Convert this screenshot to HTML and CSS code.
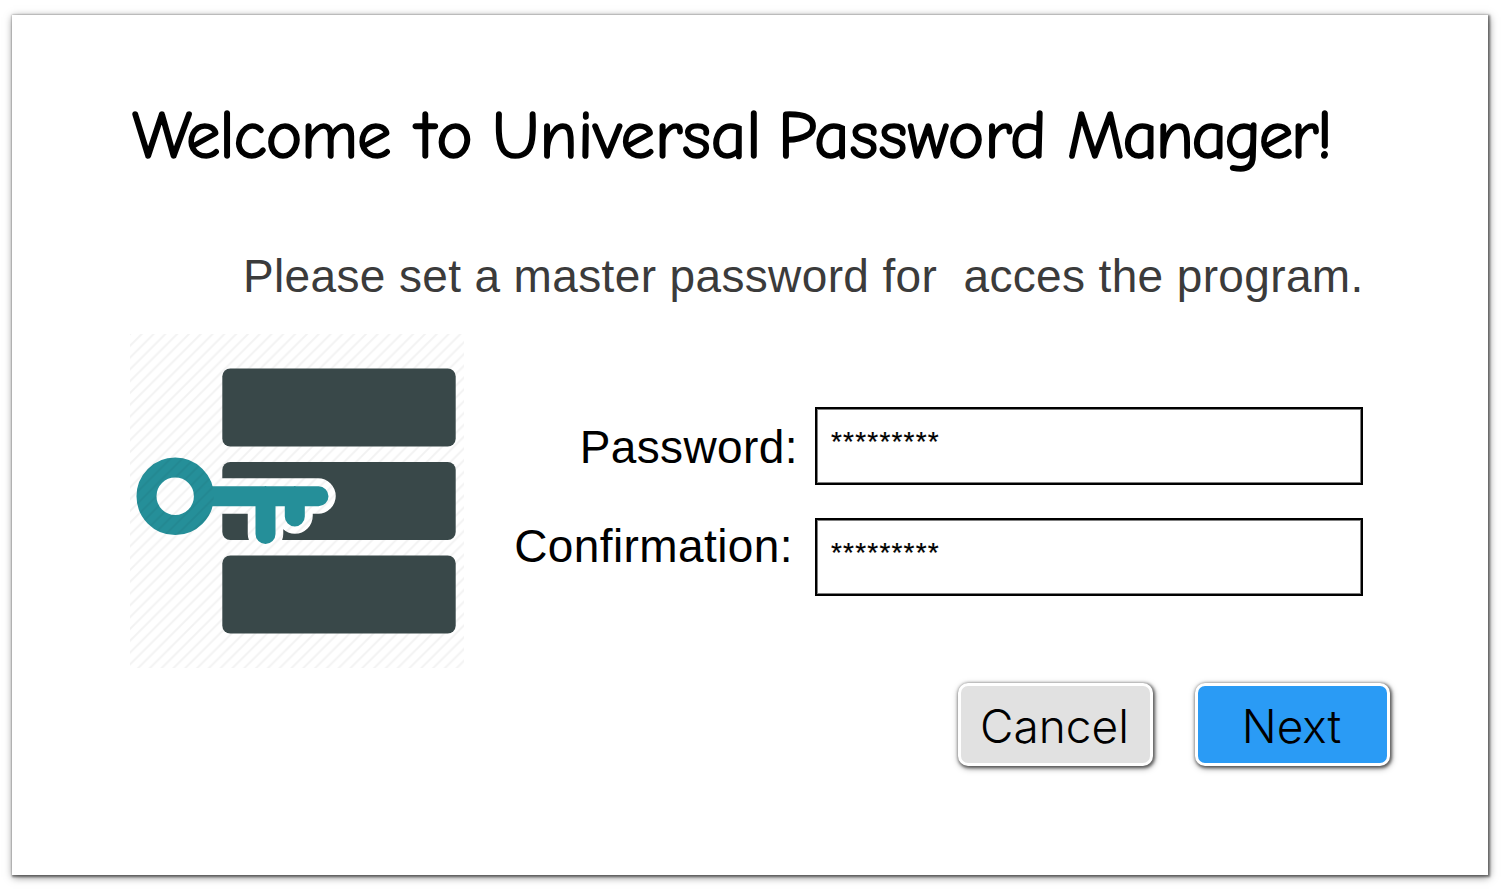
FILE: index.html
```html
<!DOCTYPE html>
<html lang="en">
<head>
<meta charset="utf-8">
<title>Universal Password Manager</title>
<link rel="stylesheet" href="styles.css">
</head>
<body>
<main class="dialog">
  <h1 class="title"><span class="w1">Welcome</span><span class="w2">to</span><span class="w3">Universal</span><span class="w4">Password</span><span class="w5">Manager!</span></h1>
  <p class="subtitle">Please set a master password for&nbsp; acces the program.</p>
  <div class="content">
    <svg class="emblem" viewBox="0 0 334 334" aria-hidden="true">
      <defs>
        <pattern id="hatch" width="11.8" height="11.8" patternUnits="userSpaceOnUse">
          <path d="M-3 3L3-3M-1 12.8L12.8-1M8.800 14.800L14.800 8.800" stroke="#000" stroke-opacity=".05" stroke-width="1.700"/>
        </pattern>
        <mask id="keyGap">
          <rect width="334" height="334" fill="#fff"/>
          <path d="M50 162H188M135.500 162V200M165 162V182" fill="none" stroke="#000" stroke-width="35.500" stroke-linecap="round"/>
          <path d="M122 188H149V210H122Z" fill="#000"/>
        </mask>
      </defs>
      <rect width="334" height="334" fill="url(#hatch)"/>
      <g fill="#394849">
        <rect x="92.300" y="34.500" width="233.400" height="78" rx="8"/>
        <rect x="92.300" y="128" width="233.400" height="78" rx="8" mask="url(#keyGap)"/>
        <rect x="92.300" y="221.500" width="233.400" height="78" rx="8"/>
      </g>
      <g fill="none" stroke="#258f99" stroke-width="20" stroke-linecap="round">
        <circle cx="45.200" cy="162.300" r="28.700"/>
        <path d="M78 162.300H188.500M135.500 162V200M164.800 162V182.500"/>
      </g>
      <circle cx="45.200" cy="162.300" r="28.700" fill="none" stroke="url(#hatch)" stroke-width="20"/>
    </svg>
    <form class="form">
      <label class="label l1" for="password">Password:</label>
      <input class="field" id="password" type="text" value="*********">
      <label class="label l2" for="confirmation">Confirmation:</label>
      <input class="field" id="confirmation" type="text" value="*********">
    </form>
  </div>
  <div class="actions">
    <button class="button cancel" type="button">Cancel</button>
    <button class="button next" type="button">Next</button>
  </div>
</main>
</body>
</html>
```

FILE: styles.css
```css
* { box-sizing: border-box; }
body { margin: 0; padding: 15px 22px 17px 12px; background: #fff; font-family: "Liberation Sans", Arial, sans-serif; color: #000; overflow: hidden; }
.dialog { width: 1476px; height: 860px; padding: 81px 98px 0 118px; background: #fff; box-shadow: 1px 1px 2px 1px rgba(0,0,0,.45), 1px 2px 8px rgba(0,0,0,.5); }
.title { display: flex; margin: 0 0 70px; height: 80px; font: 400 69px/80px "Comic Sans MS", "Comic Neue", "Noto Sans", sans-serif; white-space: nowrap; -webkit-text-stroke: 1.6px #000; }
.title span { flex: none; }
.w1 { width: 286px; padding-left: 2px; letter-spacing: -1.1px; }
.w2 { width: 76px; letter-spacing: 2.500px; }
.w3 { width: 286px; letter-spacing: -.1px; }
.w4 { width: 289px; letter-spacing: .2px; }
.w5 { letter-spacing: -2.4px; }
.subtitle { margin: 0 0 28px 113px; height: 60px; font-size: 46px; line-height: 60px; letter-spacing: .36px; color: #3b3b3b; white-space: nowrap; }
.content { display: flex; }
.emblem { display: block; width: 334px; height: 334px; flex: none; }
.form { display: grid; grid-template-columns: 351px 548px; grid-template-rows: 78px 78px; row-gap: 33px; padding-top: 73px; }
.label { height: 60px; font-size: 46px; line-height: 60px; letter-spacing: .4px; text-align: right; white-space: nowrap; }
.l1 { margin: 10px 17px 0 0; }
.l2 { margin: -2px 22px 0 0; }
.field { width: 548px; height: 78px; margin: 0; padding: 0 14px 8px; border: 2px solid #000; border-radius: 0; box-shadow: inset 0 0 0 1px rgba(0,0,0,.5); background: #fff; font: 28px "Liberation Sans", Arial, sans-serif; letter-spacing: 1.2px; -webkit-text-stroke: .2px #000; color: #000; }
.actions { display: flex; gap: 42px; margin: 15px 0 0 828px; }
.button { width: 195px; height: 83px; flex: none; padding: 3px 2px 0 0; border: 3px solid #fff; border-radius: 10px; font: 300 46px Inter, sans-serif; color: #000; box-shadow: 1px 1px 3px 1px rgba(0,0,0,.45), 1px 2px 6px rgba(0,0,0,.5); }
.cancel { background: #e1e1e1; }
.next { background: #2a9bf5; }
```
